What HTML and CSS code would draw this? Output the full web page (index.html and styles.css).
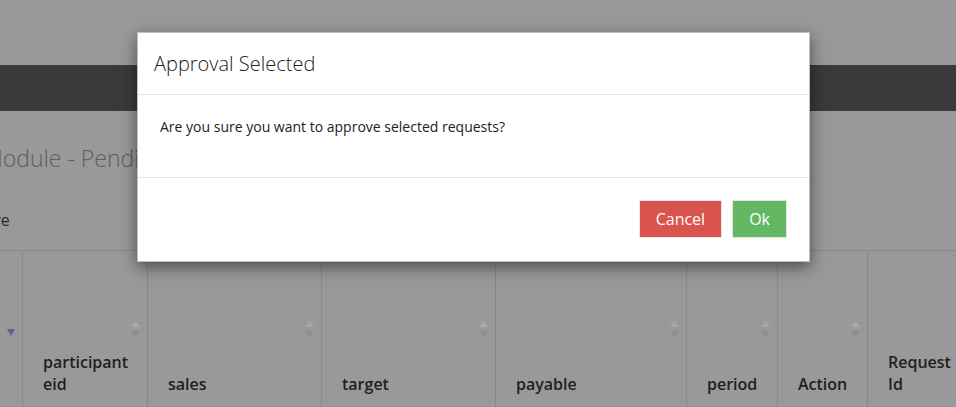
FILE: index.html
```html
<!DOCTYPE html>
<html lang="en">
<head>
<meta charset="utf-8">
<title>Approval Selected</title>
<link rel="stylesheet" href="styles.css">
</head>
<body>
<div class="page">
  <div class="navbar"></div>
  <h1 class="page-title">Module - Pending Requests</h1>
  <div class="toolbar">Approve</div>
  <div class="thead">
    <div class="th th-check">
      <svg class="sort-desc" width="8" height="7" viewBox="0 0 8 7"><path d="M0 0H8L4 7Z" fill="#5b6593"/></svg>
    </div>
    <div class="th w1"><span class="label">participant eid</span><svg class="sort" width="9" height="16" viewBox="0 0 9 16"><path d="M4.5 0L9 6H0Z" fill="#a9a9a9"/><path d="M0 10H9L4.5 16Z" fill="#8e8e8e"/></svg></div>
    <div class="th w2"><span class="label">sales</span><svg class="sort" width="9" height="16" viewBox="0 0 9 16"><path d="M4.5 0L9 6H0Z" fill="#a9a9a9"/><path d="M0 10H9L4.5 16Z" fill="#8e8e8e"/></svg></div>
    <div class="th w2"><span class="label">target</span><svg class="sort" width="9" height="16" viewBox="0 0 9 16"><path d="M4.5 0L9 6H0Z" fill="#a9a9a9"/><path d="M0 10H9L4.5 16Z" fill="#8e8e8e"/></svg></div>
    <div class="th w3"><span class="label">payable</span><svg class="sort" width="9" height="16" viewBox="0 0 9 16"><path d="M4.5 0L9 6H0Z" fill="#a9a9a9"/><path d="M0 10H9L4.5 16Z" fill="#8e8e8e"/></svg></div>
    <div class="th w4"><span class="label">period</span><svg class="sort" width="9" height="16" viewBox="0 0 9 16"><path d="M4.5 0L9 6H0Z" fill="#a9a9a9"/><path d="M0 10H9L4.5 16Z" fill="#8e8e8e"/></svg></div>
    <div class="th w5"><span class="label">Action</span><svg class="sort" width="9" height="16" viewBox="0 0 9 16"><path d="M4.5 0L9 6H0Z" fill="#a9a9a9"/><path d="M0 10H9L4.5 16Z" fill="#8e8e8e"/></svg></div>
    <div class="th w6"><span class="label">Request Id</span></div>
  </div>
</div>

<div class="modal" role="dialog" aria-labelledby="modal-title">
  <div class="modal-header">
    <h4 class="modal-title" id="modal-title">Approval Selected</h4>
  </div>
  <div class="modal-body">
    <p>Are you sure you want to approve selected requests?</p>
  </div>
  <div class="modal-footer">
    <button class="btn btn-danger" type="button">Cancel</button>
    <button class="btn btn-success" type="button">Ok</button>
  </div>
</div>
</body>
</html>
```

FILE: styles.css
```css
* { box-sizing: border-box; }

html, body {
  margin: 0;
  height: 100%;
}

body {
  background: #999999;
  font-family: "Open Sans", "Liberation Sans", sans-serif;
  color: #333;
  overflow: hidden;
}

.page {
  display: flex;
  flex-direction: column;
  width: 956px;
  padding-top: 65px;
}

.navbar {
  height: 46px;
  background: #3a3a3a;
}

.page-title {
  margin: 31px 0 0 -17px;
  font-size: 23px;
  line-height: 32px;
  font-weight: 300;
  color: #55606c;
  white-space: nowrap;
}

.toolbar {
  margin: 35px 0 0 -53px;
  font-size: 16px;
  line-height: 22px;
  color: #2b2b2b;
  white-space: nowrap;
}

.thead {
  display: flex;
  margin-top: 19px;
  border-top: 1px solid #888888;
  height: 157px;
}

.th {
  display: flex;
  align-items: flex-end;
  padding: 0 7px 0 20px;
  border-left: 1px solid #888888;
  font-size: 16px;
  line-height: 22px;
  font-weight: 600;
  color: #1f1f1f;
  flex: none;
}

.th-check {
  width: 22px;
  border-left: 0;
  padding: 0 7px 0 0;
  justify-content: flex-end;
  align-items: center;
}

.sort-desc {
  margin-top: 6px;
}

.w1 { width: 125px; }
.w2 { width: 174px; }
.w3 { width: 191px; }
.w4 { width: 91px; }
.w5 { width: 90px; }
.w6 { flex: 1 1 auto; padding-right: 10px; }

.label {
  padding-bottom: 12px;
  margin-right: 4px;
  min-width: 0;
}

.sort {
  align-self: center;
  margin-left: auto;
  flex: none;
}

/* Modal */
.modal {
  position: absolute;
  left: 137px;
  top: 32px;
  width: 673px;
  background: #fff;
  border: 1px solid rgba(0, 0, 0, 0.25);
  box-shadow: 0 5px 15px rgba(0, 0, 0, 0.5);
}

.modal-header {
  padding: 16px;
  border-bottom: 1px solid #e5e5e5;
}

.modal-title {
  margin: 0;
  font-size: 20px;
  line-height: 29px;
  font-weight: 300;
  color: #222;
}

.modal-body {
  padding: 22px 22px 40px;
}

.modal-body p {
  margin: 0;
  font-size: 14px;
  line-height: 20px;
  color: #222;
}

.modal-footer {
  display: flex;
  justify-content: flex-end;
  gap: 10px;
  padding: 22px 22px 23px;
  border-top: 1px solid #e5e5e5;
}

.btn {
  font-family: "Open Sans", "Liberation Sans", sans-serif;
  font-size: 16px;
  line-height: 22px;
  padding: 7px 16px;
  border: 1px solid #e6e6e6;
  border-radius: 0;
  color: #fff;
  cursor: pointer;
}

.btn-danger { background: #d9534f; }
.btn-success { background: #63b963; }
```
